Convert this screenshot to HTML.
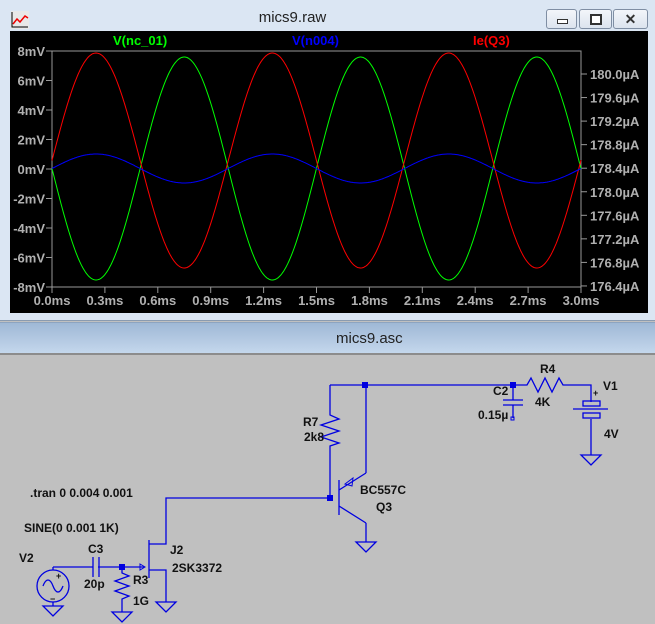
<!DOCTYPE html>
<html><head><meta charset="utf-8"><style>
body{margin:0;width:655px;height:624px;overflow:hidden;background:#c0c0c0;font-family:"Liberation Sans",sans-serif;position:relative}
.tw{position:absolute;left:0;top:0;width:655px;height:320px;background:#dbe6f3;border-bottom:1px solid #8a9bb0}
.plot{position:absolute;left:10px;top:31px;width:638px;height:282px;background:#000}
.bt{position:absolute;top:9px;height:18px;border:1px solid #7f8ea3;border-radius:3px;background:linear-gradient(#f3f6fa,#dce4ee)}
.t2{position:absolute;left:0;top:322px;width:655px;height:30px;background:linear-gradient(#9fb8d6,#c4d7ec);border-top:1px solid #8da4c0;border-bottom:2px solid #8c8c8c;font:15px "Liberation Sans",sans-serif;line-height:31px;color:#222}
svg text{font-family:"Liberation Sans",sans-serif}
</style></head><body>
<div class="tw">
 <div style="position:absolute;left:0;top:0;width:655px;text-align:center;font-size:15px;line-height:36px;color:#222;margin-left:-35px">mics9.raw</div>
 <svg style="position:absolute;left:11px;top:11px" width="18" height="18"><rect x="0" y="0" width="18" height="18" fill="#e8e8e8"/><path d="M1 1V16H17" stroke="#000" fill="none"/><path d="M2 13L6 8L9 11L14 5L17 7" stroke="#e00" fill="none" stroke-width="1.5"/></svg>
 <div class="bt" style="left:546px;width:29px"><div style="position:absolute;left:10px;top:9px;width:9px;height:3px;border:1px solid #333;background:#fff"></div></div>
 <div class="bt" style="left:579px;width:31px"><div style="position:absolute;left:10px;top:4px;width:8px;height:7px;border:2px solid #333;background:#fff"></div></div>
 <div class="bt" style="left:613px;width:33px;text-align:center;font:bold 14px 'Liberation Sans';line-height:18px;color:#333">✕</div>
 <div class="plot"></div>
 <svg id="p" style="position:absolute;left:0;top:0" width="655" height="320"></svg>
</div>
<div class="t2"><span style="position:absolute;left:336px">mics9.asc</span></div>
<svg id="s" style="position:absolute;left:0;top:0" width="655" height="624">
<g stroke="#0000e0" stroke-width="1.3" fill="none">
<path d="M330 385H513M330 385V415l9 4l-18 6l18 6l-18 6l18 6l-9 3V498M366 385V473M366 523V542"/>
<path d="M339 480V515M339 490L366 473M339 506L366 523"/>
<path d="M345 484l8-6l-1 8z" stroke-width="1"/>
<path d="M330 498H166V544H149M149 540V578M149 570H166V602M53 567H93M98 567H144"/>
<path d="M140 564l5 3l-5 3z" stroke-width="1"/>
<path d="M93 557V577M99 557V577"/>
<path d="M122 567V573l7 3l-14 5l14 5l-14 5l14 5l-7 3V612"/>
<circle cx="53" cy="586" r="16"/>
<path d="M53 570V567M53 602V606M43 586c3-8 7-8 10 0s7 8 10 0"/>
<path d="M513 385V400M503 400H523M503 405H523M513 405V418M513 385H527l4-7l7 14l7-14l7 14l7-14l4 7H591V402M573 409H608M591 419V455"/>
<rect x="583" y="401" width="17" height="5"/><rect x="583" y="413" width="17" height="5"/>
<path d="M356 542H376L366 552ZM156 602H176L166 612ZM112 612H132L122 622ZM43 606H63L53 616ZM581 455H601L591 465Z"/>
</g>
<g fill="#0000e0"><rect x="362" y="382" width="6" height="6"/><rect x="510" y="382" width="6" height="6"/><rect x="327" y="495" width="6" height="6"/><rect x="119" y="564" width="6" height="6"/></g>
<rect x="511" y="417" width="3" height="3" fill="none" stroke="#0000e0" stroke-width="1"/>
<g font-size="12" font-weight="bold" fill="#111">
<text x="540" y="373">R4</text><text x="535" y="406">4K</text><text x="493" y="395">C2</text><text x="478" y="419">0.15µ</text>
<text x="603" y="390">V1</text><text x="604" y="438">4V</text><text x="303" y="426">R7</text><text x="304" y="441">2k8</text>
<text x="360" y="494">BC557C</text><text x="376" y="511">Q3</text><text x="30" y="497">.tran 0 0.004 0.001</text>
<text x="24" y="532">SINE(0 0.001 1K)</text><text x="19" y="562">V2</text><text x="88" y="553">C3</text><text x="84" y="588">20p</text>
<text x="133" y="584">R3</text><text x="133" y="605">1G</text><text x="170" y="554">J2</text><text x="172" y="572">2SK3372</text>
<text x="56" y="579" font-size="9">+</text><text x="50" y="602" font-size="9">−</text><text x="593" y="396" font-size="9">+</text>
</g>
</svg>
<script>
var p=document.getElementById('p'),h='';
h+='<rect x="52" y="51" width="529" height="236" fill="none" stroke="#999"/>';
var L=['8mV','6mV','4mV','2mV','0mV','-2mV','-4mV','-6mV','-8mV'];
for(var i=0;i<9;i++){var y=51+i*29.5;h+='<line x1="46" x2="52" y1="'+y+'" y2="'+y+'" stroke="#999"/><text x="45" y="'+(y+5)+'" fill="#b0b0b0" font-size="13" font-weight="bold" text-anchor="end">'+L[i]+'</text>';}
for(var i=0;i<10;i++){var y=74+i*23.55;h+='<line x1="581" x2="587" y1="'+y+'" y2="'+y+'" stroke="#999"/><text x="590" y="'+(y+5)+'" fill="#b0b0b0" font-size="13" font-weight="bold">'+(180.0-0.4*i).toFixed(1)+'µA</text>';}
for(var i=0;i<11;i++){var x=52+i*52.9;h+='<line x1="'+x+'" x2="'+x+'" y1="287" y2="293" stroke="#999"/><text x="'+x+'" y="305" fill="#b0b0b0" font-size="13" font-weight="bold" text-anchor="middle">'+(0.3*i).toFixed(1)+'ms</text>';}
function c(cy,a,col){var d='';for(var x=0;x<=529;x+=1){var t=x/176.3;d+=(x?'L':'M')+(52+x)+' '+(cy-a*Math.sin(2*Math.PI*t)).toFixed(1);}return '<path d="'+d+'" stroke="'+col+'" fill="none"/>';}
h+=c(168.5,-111.5,'#00ff00')+c(160.5,107.5,'#ff0000')+c(168.5,14.5,'#0000ff');
h+='<g font-size="13" font-weight="bold"><text x="113" y="45" fill="#00ff00">V(nc_01)</text><text x="292" y="45" fill="#0000ff">V(n004)</text><text x="473" y="45" fill="#ff0000">Ie(Q3)</text></g>';
p.innerHTML=h;
</script>
</body></html>
